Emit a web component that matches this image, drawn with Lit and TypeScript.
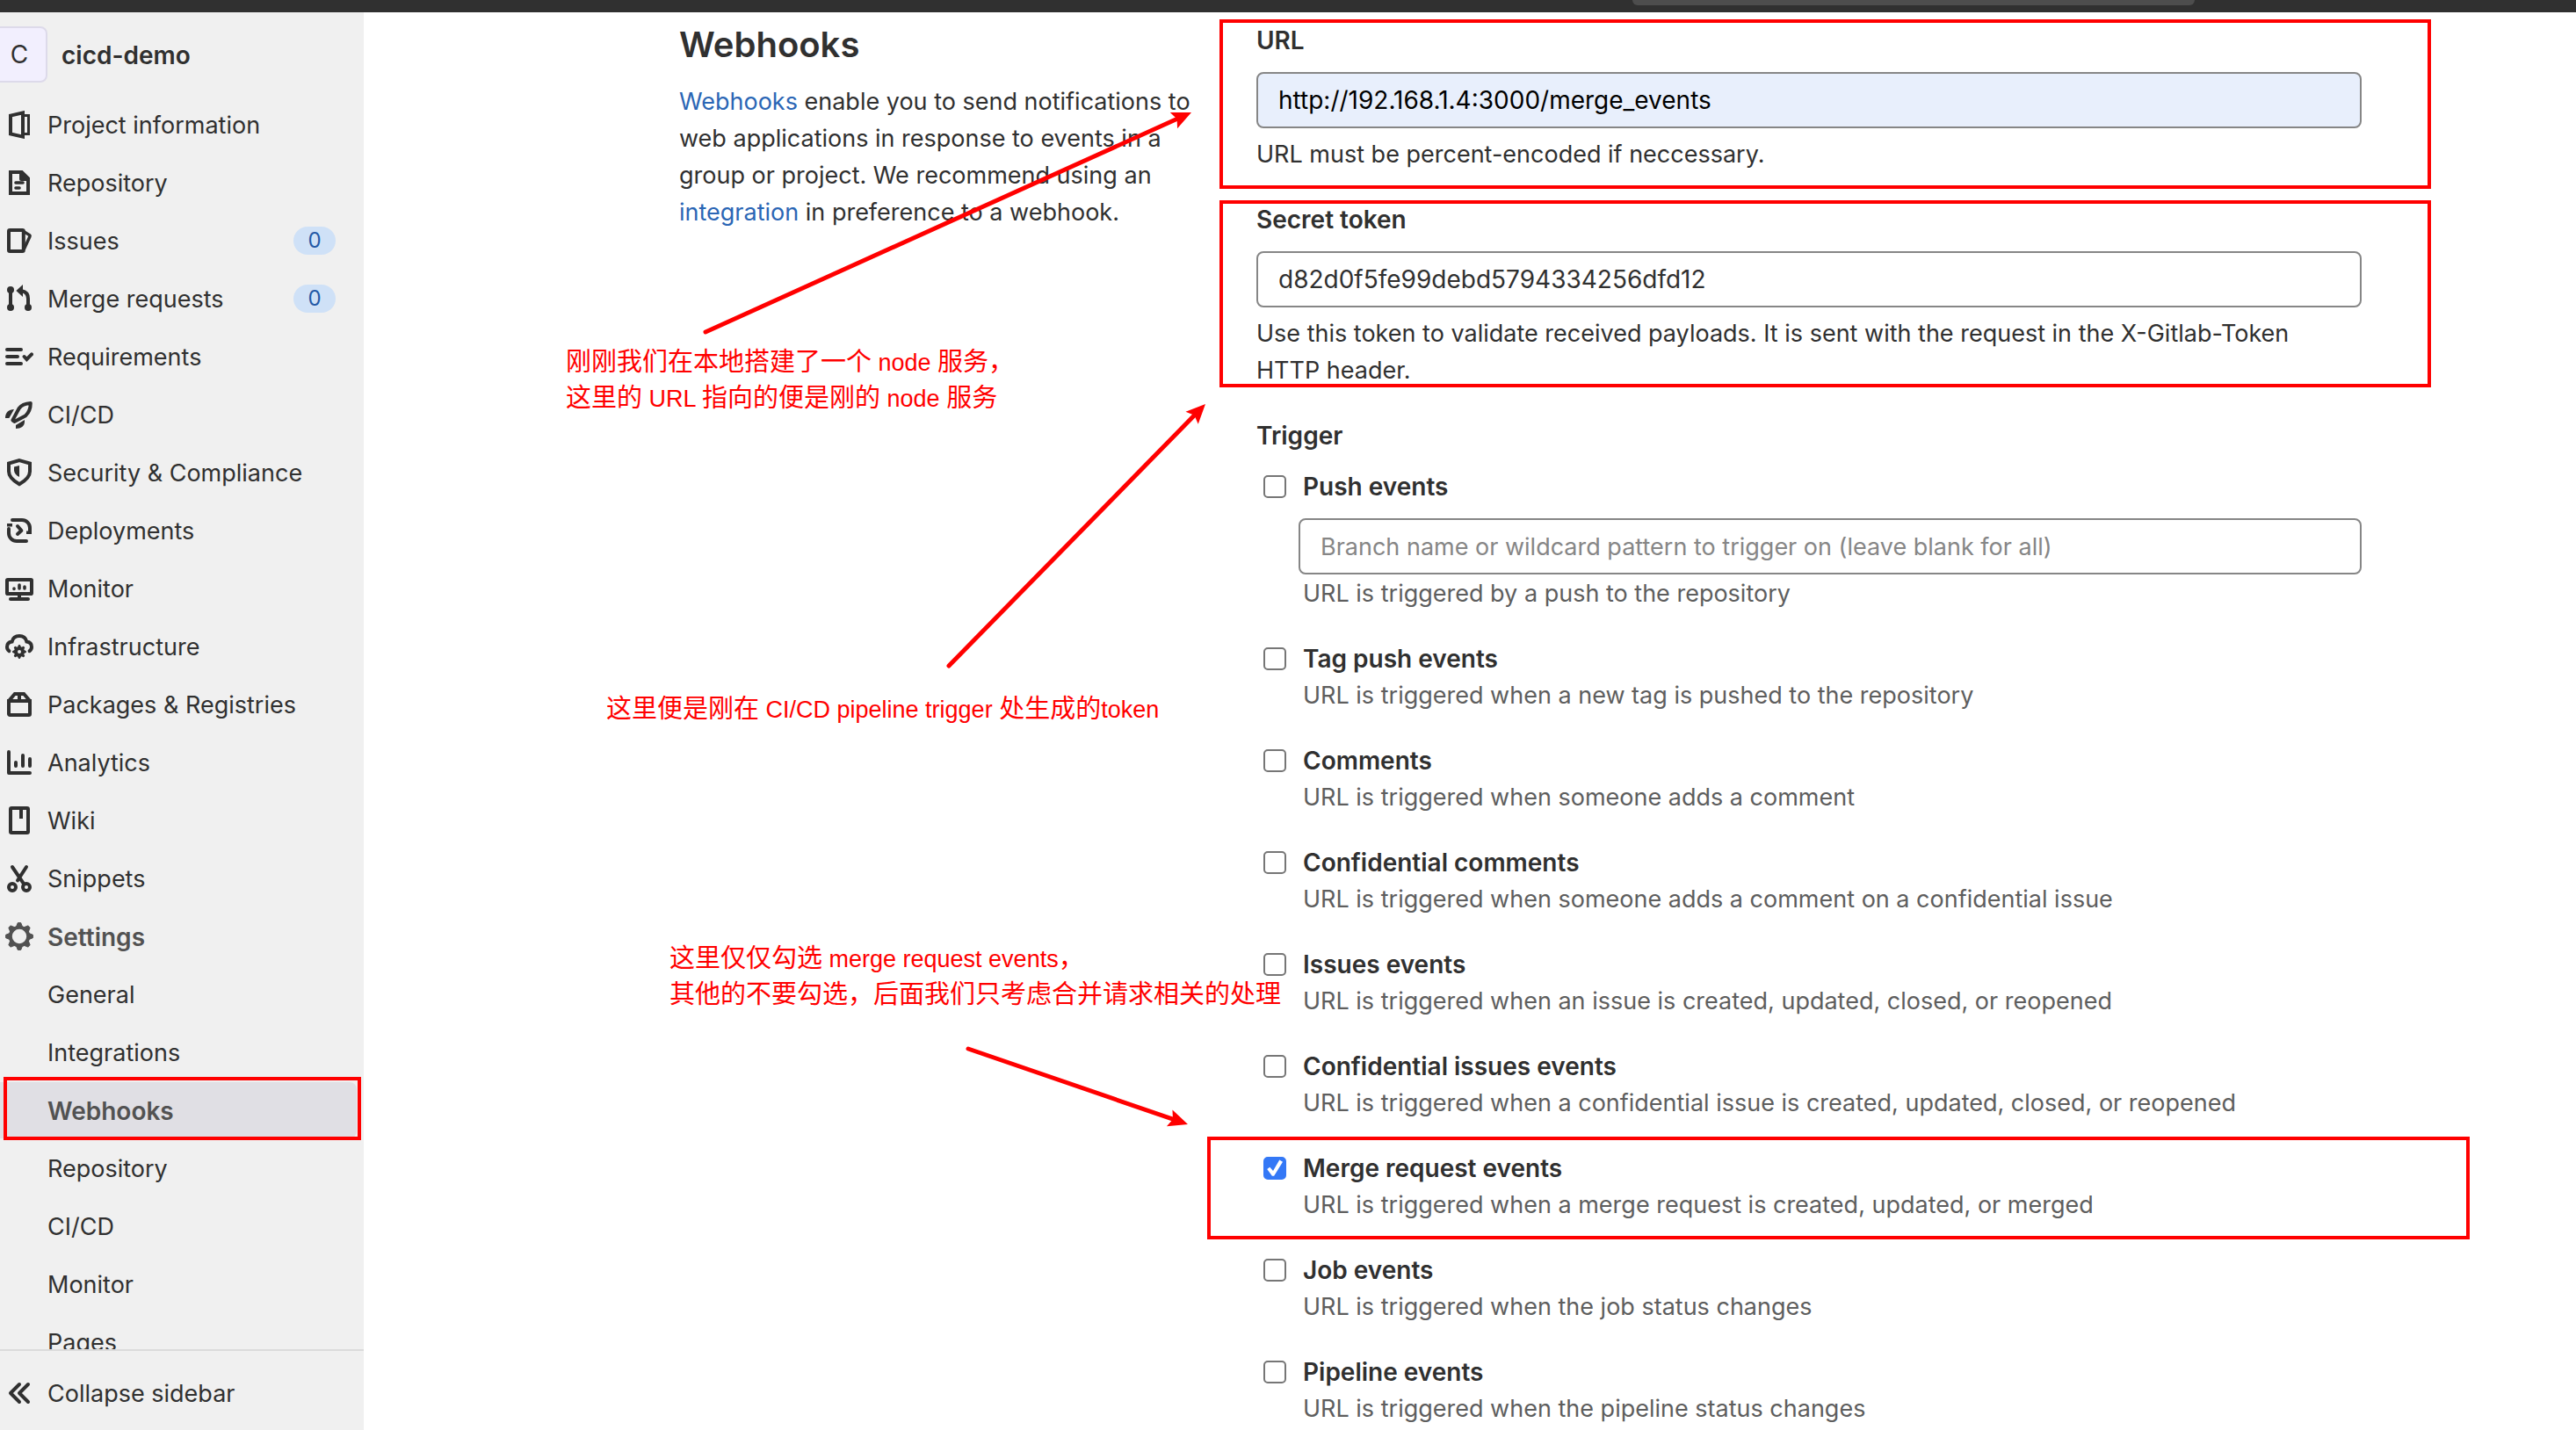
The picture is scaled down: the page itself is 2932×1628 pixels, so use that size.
import { LitElement, html, css, svg, nothing } from "lit";
import type { SVGTemplateResult } from "lit";
import { customElement, property } from "lit/decorators.js";
import { classMap } from "lit/directives/class-map.js";

const gearTeeth = (cx: number, cy: number, inner: number, outer: number, half: number) =>
  [0, 45, 90, 135, 180, 225, 270, 315].map(
    (a) => svg`<path transform="rotate(${a} ${cx} ${cy})" d="M${cx - half} ${cy - inner}L${cx - half * 0.5} ${cy - outer}h${half}L${cx + half} ${cy - inner}z" fill="currentColor" stroke="currentColor" stroke-width=".5" stroke-linejoin="round"/>`
  );

const ICONS: Record<string, SVGTemplateResult> = {
  project: svg`<path d="M3 2.8 10 1.2v13.6L3 13.2z"/><path stroke-width="1.5" d="M10.5 2.75h2.75v10.5H10.5"/>`,
  doc: svg`<path d="M3 2h6.4L13 5.6V14H3z"/><path fill="currentColor" stroke="none" d="M8 1.6h1.6L13.4 5.4V7H9a1 1 0 0 1-1-1z"/><path stroke-width="1.8" stroke-linecap="round" d="M6 8h4M6 11h2"/>`,
  issues: svg`<rect x="2" y="2" width="8.4" height="12" rx=".6"/><path stroke-width="1.7" d="M10.6 2.8l3.3 2.1c.2.2.3.4.1.7L10.6 13"/>`,
  merge: svg`<path d="M3 3v10M13 13V8c0-2.4-1.2-4-3.6-4.4"/><g fill="currentColor" stroke="none"><circle cx="3" cy="3" r="2"/><circle cx="3" cy="13" r="2"/><circle cx="13" cy="13" r="2"/><path d="M10 0v7L6.2 3.5z"/></g>`,
  requirements: svg`<path stroke-linecap="round" d="M1 4h8M1 8h6M1 12h8M10.8 8l1.4 1.5L15 6.7"/>`,
  rocket: svg`<path stroke-width="2" stroke-linejoin="round" d="M14.4 1.5c-3 .2-5.200 1-6.600 3L4.200 11.200l1 .8L11.600 8.600c1.800-1.800 2.800-4.200 2.800-7.100z"/><path fill="currentColor" stroke="none" d="M5 5C2 5 0 6.800 0 10h2.200zM11 11v1c0 2.600-2 4-5 4v-2z"/>`,
  shield: svg`<path d="M8 1.1l6 1.7v4.600c0 2.900-2.400 5.200-6 7.200-3.600-2-6-4.300-6-7.200V2.800z"/><path fill="currentColor" stroke="none" d="M8 4v6.500C6 9.500 5 8.200 5 6.600V4.800z"/>`,
  deploy: svg`<path stroke-linecap="round" d="M4 2h5.500A4.500 4.500 0 0 1 14 6.500V9M12 14H6.500A4.500 4.500 0 0 1 2 9.500V7"/><path d="M11 9h4M1 5h4" stroke="none"/><path fill="currentColor" stroke="none" d="M12 8.200h3V10h-3zM1 4h3v1.800H1z"/><path stroke-linecap="round" stroke-linejoin="round" d="M7 5.500 9.200 8 7 10"/>`,
  monitor: svg`<rect x="1" y="3" width="14" height="8" rx=".4"/><path stroke-linecap="round" d="M3 14h10"/><path d="M8 11v3"/><path stroke-width="1.800" stroke-linecap="round" d="M5 8v.2M8 6v2M11 7v1"/>`,
  cloud: svg`<path stroke-linecap="round" d="M2.200 10.600C1.400 10 1 9.200 1 8.200c0-1.800 1.200-2.800 2.800-3C4.300 3.200 5.800 2 8 2s3.700 1.200 4.200 3.200c1.600.2 2.800 1.200 2.800 3 0 1-.4 1.800-1.200 2.400"/><circle cx="8" cy="11" r="2"/>${gearTeeth(8, 11, 2.6, 3.7, 0.7)}`,
  package: svg`<path d="M2 6v7.400a.6.6 0 0 0 .6.6h10.800a.6.6 0 0 0 .6-.6V6zM2 6l3.400-4h5.200L14 6M8 2v4"/>`,
  chart: svg`<path stroke-linecap="round" stroke-linejoin="round" d="M2 2v12h12M6 8v2M10 4v6M14 6v4"/>`,
  book: svg`<rect x="3" y="1" width="10" height="14" rx=".6"/><path d="M9 1v6"/>`,
  scissors: svg`<path stroke-linecap="round" d="M4 1.500l6.600 9.700M12 1.500L7 9.200"/><circle cx="4" cy="13" r="2"/><circle cx="12" cy="13" r="2"/>`,
  gear: svg`<circle cx="8" cy="8" r="5.100"/>${gearTeeth(8, 8, 5.6, 7.7, 1.7)}`,
  collapse: svg`<path stroke-linecap="round" stroke-linejoin="round" d="M8 3 3 8l5 5M13 3 8 8l5 5"/>`,
};

interface NavItem { label: string; icon?: string; count?: number; strong?: boolean; current?: boolean }

const NAV: NavItem[] = [
  { label: "Project information", icon: "project" },
  { label: "Repository", icon: "doc" },
  { label: "Issues", icon: "issues", count: 0 },
  { label: "Merge requests", icon: "merge", count: 0 },
  { label: "Requirements", icon: "requirements" },
  { label: "CI/CD", icon: "rocket" },
  { label: "Security & Compliance", icon: "shield" },
  { label: "Deployments", icon: "deploy" },
  { label: "Monitor", icon: "monitor" },
  { label: "Infrastructure", icon: "cloud" },
  { label: "Packages & Registries", icon: "package" },
  { label: "Analytics", icon: "chart" },
  { label: "Wiki", icon: "book" },
  { label: "Snippets", icon: "scissors" },
  { label: "Settings", icon: "gear", strong: true },
  { label: "General" },
  { label: "Integrations" },
  { label: "Webhooks", strong: true, current: true },
  { label: "Repository" },
  { label: "CI/CD" },
  { label: "Monitor" },
  { label: "Pages" },
];

interface Trigger { id: string; label: string; help: string; branch?: boolean; checked?: boolean }

const TRIGGERS: Trigger[] = [
  { id: "push", label: "Push events", help: "URL is triggered by a push to the repository", branch: true },
  { id: "tag", label: "Tag push events", help: "URL is triggered when a new tag is pushed to the repository" },
  { id: "note", label: "Comments", help: "URL is triggered when someone adds a comment" },
  { id: "cnote", label: "Confidential comments", help: "URL is triggered when someone adds a comment on a confidential issue" },
  { id: "issue", label: "Issues events", help: "URL is triggered when an issue is created, updated, closed, or reopened" },
  { id: "cissue", label: "Confidential issues events", help: "URL is triggered when a confidential issue is created, updated, closed, or reopened" },
  { id: "mr", label: "Merge request events", help: "URL is triggered when a merge request is created, updated, or merged", checked: true },
  { id: "job", label: "Job events", help: "URL is triggered when the job status changes" },
  { id: "pipeline", label: "Pipeline events", help: "URL is triggered when the pipeline status changes" },
];

// Each arrow runs from its first point to its tip: x1, y1, x2, y2.
const ARROWS = [
  [803, 378, 1356, 128],
  [1080, 758, 1372, 460],
  [1102, 1194, 1352, 1280],
];

const base = css`
  :host, :host * { box-sizing: border-box; }
  a { color: inherit; text-decoration: none; }
  h1, h2, p, ul, fieldset, legend { margin: 0; padding: 0; border: 0; list-style: none; }
  button, input { font: inherit; color: inherit; margin: 0; }
  .mark { position: absolute; border: 4px solid #f00; pointer-events: none; }
`;

@customElement("side-nav")
export class SideNav extends LitElement {
  static styles = [base, css`
    :host { display: flex; flex-direction: column; width: 414px; flex: none; background: #f0f0f0; min-height: 0; }
    .project { display: flex; align-items: center; gap: 16px; padding: 16px 0; font-size: 28px; font-weight: 600; }
    .avatar { width: 64px; height: 64px; margin-left: -10px; border: 2px solid #dddaea; border-radius: 8px; background: #f2effe; display: flex; align-items: center; justify-content: center; font-weight: 400; }
    .list { flex: 1; min-height: 0; overflow: hidden; display: flex; flex-direction: column; gap: 2px; }
    .item { flex: none; position: relative; }
    .link { display: flex; align-items: center; height: 64px; margin-right: 8px; padding: 0 24px 0 6px; gap: 16px; border-radius: 0 8px 8px 0; }
    .strong { font-size: 28px; font-weight: 600; color: #525252; }
    .current { background: #e0dfe4; }
    .icon { width: 32px; height: 32px; flex: none; fill: none; stroke: currentColor; stroke-width: 2; }
    .label { flex: 1; padding-top: 2px; }
    .count { width: 48px; height: 32px; border-radius: 16px; background: #cfe1f7; color: #2459a6; font-size: 24px; line-height: 32px; text-align: center; }
    .mark { inset: -6px 3px -2px 4px; }
    .collapse { display: flex; align-items: center; gap: 16px; height: 92px; padding: 6px 6px 0; border: 0; border-top: 2px solid #dbdbdb; background: none; text-align: left; }
  `];

  private icon(name?: string) {
    return html`<svg class="icon" viewBox="0 0 16 16" aria-hidden="true">${name ? ICONS[name] : nothing}</svg>`;
  }

  render() {
    return html`
      <a class="project" href="#"><span class="avatar">C</span><span class="label">cicd-demo</span></a>
      <ul class="list">
        ${NAV.map((n) => html`
          <li class="item">
            <a href="#" class=${classMap({ link: true, strong: !!n.strong, current: !!n.current })}>
              ${this.icon(n.icon)}
              <span class="label">${n.label}</span>
              ${n.count !== undefined ? html`<span class="count">${n.count}</span>` : nothing}
            </a>
            ${n.current ? html`<div class="mark"></div>` : nothing}
          </li>`)}
      </ul>
      <button class="collapse" type="button">${this.icon("collapse")}<span class="label">Collapse sidebar</span></button>
    `;
  }
}

@customElement("webhook-form")
export class WebhookForm extends LitElement {
  static styles = [base, css`
    :host { display: block; }
    .form { display: flex; flex-direction: column; gap: 32px; }
    .field { position: relative; display: flex; flex-direction: column; }
    .name { font-size: 28px; font-weight: 600; margin-bottom: 15px; align-self: flex-start; }
    .text { height: 64px; width: 100%; padding: 0 23px; border: 2px solid #868686; border-radius: 8px; background: #fff; outline: none; font-size: 28px; }
    .text::placeholder { color: #868686; opacity: 1; }
    .filled { background: #e8effc; color: #000; }
    .hint { margin-top: 9px; padding-right: 24px; }
    .url .mark { inset: -3px -79px -18px -42px; }
    .secret .mark { inset: -1px -79px 2px -42px; }
    .triggers { display: flex; flex-direction: column; gap: 32px; min-width: 0; }
    .triggers-name { margin-bottom: 16px; }
    .event { position: relative; display: grid; grid-template-columns: 26px minmax(0, 1fr); column-gap: 19px; padding-left: 8px; align-items: center; }
    .event .mark { inset: -15px -123px -18px -56px; }
    .check { appearance: none; width: 26px; height: 26px; border: 2px solid #767676; border-radius: 5px; background: #fff; }
    .check:checked { border-color: #3478f6; background: #3478f6; }
    .check:checked::before { content: ""; display: block; width: 22px; height: 22px; background: #fff; clip-path: polygon(10% 54%, 24% 44%, 41% 64%, 74% 7%, 91% 17%, 46% 90%, 36% 90%); }
    .title { font-size: 28px; font-weight: 600; justify-self: start; }
    .branch { grid-column: 1 / -1; margin: 15px 0 1px 40px; width: auto; font-size: 27px; }
    .help { grid-column: 2; color: #5e5e5e; }
  `];

  render() {
    return html`
      <form class="form">
        <div class="field url">
          <label class="name" for="url">URL</label>
          <input class="text filled" id="url" type="text" .value=${"http://192.168.1.4:3000/merge_events"} />
          <p class="hint">URL must be percent-encoded if neccessary.</p>
          <div class="mark"></div>
        </div>
        <div class="field secret">
          <label class="name" for="token">Secret token</label>
          <input class="text" id="token" type="text" .value=${"d82d0f5fe99debd5794334256dfd12"} />
          <p class="hint">Use this token to validate received payloads. It is sent with the request in the X-Gitlab-Token HTTP header.</p>
          <div class="mark"></div>
        </div>
        <fieldset>
          <legend class="name triggers-name">Trigger</legend>
          <div class="triggers">
            ${TRIGGERS.map((t) => html`
              <div class="event">
                <input class="check" type="checkbox" id=${t.id} .checked=${!!t.checked} />
                <label class="title" for=${t.id}>${t.label}</label>
                ${t.branch ? html`<input class="text branch" type="text" aria-label="Branch filter" placeholder="Branch name or wildcard pattern to trigger on (leave blank for all)" />` : nothing}
                <p class="help">${t.help}</p>
                ${t.checked ? html`<div class="mark"></div>` : nothing}
              </div>`)}
          </div>
        </fieldset>
      </form>
    `;
  }
}

@customElement("app-root")
export class AppRoot extends LitElement {
  @property({ type: String }) heading = "Webhooks";

  static styles = [base, css`
    :host { display: flex; flex-direction: column; position: relative; height: 100vh; overflow: hidden; background: #fff; color: #303030; font: 400 27px/42px Inter, "Noto Sans CJK SC", sans-serif; }
    .topbar { flex: none; height: 14px; padding: 0 434px 0 1858px; background: #303030; }
    .search { height: 6px; border-radius: 0 0 8px 8px; background: #4d4d4d; }
    .body { flex: 1; min-height: 0; display: flex; }
    .main { flex: 1; min-width: 0; overflow: hidden; display: grid; grid-template-columns: minmax(0, 1fr) minmax(0, 2fr); gap: 28px; padding: 11px 244px 0 359px; }
    .about { padding-top: 2px; }
    .heading { font-size: 40px; line-height: 48px; font-weight: 600; margin-bottom: 20px; }
    .link { color: #2b66b5; }
    .overlay { position: absolute; left: 0; top: 0; width: 2932px; height: 1628px; pointer-events: none; fill: #f00; stroke: #f00; }
    .note { position: absolute; color: #f00; font-family: "Liberation Sans", "Noto Sans CJK SC", sans-serif; font-size: 29px; line-height: 40px; white-space: nowrap; }
    .latin { font-size: 27px; }
    .note-url { left: 644px; top: 392px; }
    .note-token { left: 690px; top: 787px; }
    .note-merge { left: 762px; top: 1071px; }
  `];

  private arrow([x1, y1, x2, y2]: number[]) {
    const length = Math.hypot(x2 - x1, y2 - y1);
    const angle = (Math.atan2(y2 - y1, x2 - x1) * 180) / Math.PI;
    return svg`<g transform="translate(${x1} ${y1}) rotate(${angle})">
      <line x1="0" y1="0" x2=${length - 14} y2="0" stroke-width="5" stroke-linecap="round"/>
      <path stroke="none" d="M${length} 0l-22 -10l4 10l-4 10z"/>
    </g>`;
  }

  render() {
    return html`
      <header class="topbar"><div class="search"></div></header>
      <div class="body">
        <side-nav></side-nav>
        <main class="main">
          <section class="about">
            <h1 class="heading">${this.heading}</h1>
            <p><a class="link" href="#">Webhooks</a> enable you to send notifications to web applications in response to events in a group or project. We recommend using an <a class="link" href="#">integration</a> in preference to a webhook.</p>
          </section>
          <webhook-form></webhook-form>
        </main>
      </div>
      <svg class="overlay" viewBox="0 0 2932 1628" aria-hidden="true">${ARROWS.map((a) => this.arrow(a))}</svg>
      <p class="note note-url">刚刚我们在本地搭建了一个<span class="latin"> node </span>服务，<br />这里的<span class="latin"> URL </span>指向的便是刚的<span class="latin"> node </span>服务</p>
      <p class="note note-token">这里便是刚在<span class="latin"> CI/CD pipeline trigger </span>处生成的<span class="latin">token</span></p>
      <p class="note note-merge">这里仅仅勾选<span class="latin"> merge request events</span>，<br />其他的不要勾选，后面我们只考虑合并请求相关的处理</p>
    `;
  }
}
